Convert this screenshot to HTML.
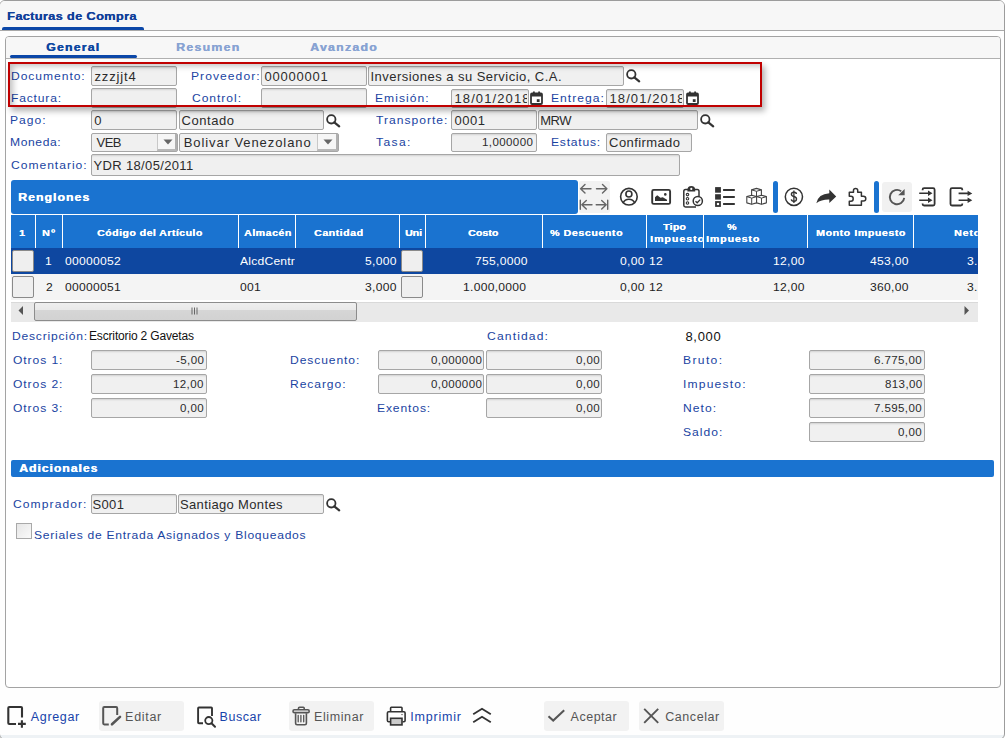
<!DOCTYPE html><html><head><meta charset="utf-8"><style>
*{box-sizing:border-box;margin:0;padding:0}
html,body{width:1005px;height:738px;overflow:hidden;background:#fff;font-family:"Liberation Sans",sans-serif}
div{position:absolute}
.t{white-space:pre;line-height:20px}
.inp{border:1px solid #a6a6a6;border-radius:2px;background:#f0f0f0;box-shadow:inset 0 2px 2px -1px rgba(0,0,0,.13)}
svg{position:absolute;overflow:visible}
</style></head><body>
<div style="left:-1px;top:0px;width:1006px;height:740px;border:1px solid #9c9c9c;border-radius:6px;background:linear-gradient(#fefefe 734px,#eef2f5 734px)"></div>
<div style="left:0px;top:1px;width:1004px;height:29px;background:#f7f7f7;border-radius:5px 5px 0 0"></div>
<div style="left:0px;top:30px;width:1004px;height:1px;background:#a9a9a9"></div>
<div style="left:2px;top:27px;width:142px;height:3px;background:#0b47a8;border-radius:2px 2px 0 0"></div>
<div class="t" style="left:6.50px;top:6px;font-size:11.5px;font-weight:bold;color:#10409a;letter-spacing:0.254px;transform:scaleX(1.12);transform-origin:0 0;text-shadow:0.25px 0 0 #10409a;">Facturas de Compra</div>
<div style="left:5px;top:36px;width:996px;height:652px;border:1px solid #a3a3a3;border-radius:4px;background:#fff"></div>
<div style="left:6px;top:37px;width:994px;height:21px;background:#f7f7f7;border-radius:3px 3px 0 0"></div>
<div style="left:6px;top:58px;width:994px;height:1px;background:#b0b0b0"></div>
<div style="left:10px;top:55px;width:127px;height:3px;background:#0b47a8;border-radius:2px"></div>
<div class="t" style="left:46.40px;top:37px;font-size:11px;font-weight:bold;color:#0d47a1;letter-spacing:1.054px;transform:scaleX(1.12);transform-origin:0 0;text-shadow:0.4px 0 0 #0d47a1;">General</div>
<div class="t" style="left:176.00px;top:37px;font-size:11px;font-weight:bold;color:#88a3d3;letter-spacing:1.125px;transform:scaleX(1.12);transform-origin:0 0;text-shadow:0.4px 0 0 #88a3d3;">Resumen</div>
<div class="t" style="left:310.00px;top:37px;font-size:11px;font-weight:bold;color:#88a3d3;letter-spacing:1.125px;transform:scaleX(1.12);transform-origin:0 0;text-shadow:0.4px 0 0 #88a3d3;">Avanzado</div>
<div class="t" style="left:11.20px;top:66px;font-size:11px;font-weight:normal;color:#1a44a2;letter-spacing:0.856px;transform:scaleX(1.1);transform-origin:0 0;">Documento:</div>
<div class="inp" style="left:91px;top:66px;width:86px;height:20px;"></div>
<div class="t" style="left:94.50px;top:67px;font-size:13px;font-weight:normal;color:#2b2b2b;letter-spacing:0.850px;">zzzjjt4</div>
<div class="t" style="left:191.10px;top:66px;font-size:11px;font-weight:normal;color:#1a44a2;letter-spacing:0.951px;transform:scaleX(1.1);transform-origin:0 0;">Proveedor:</div>
<div class="inp" style="left:261px;top:66px;width:106px;height:20px;"></div>
<div class="t" style="left:264.50px;top:67px;font-size:13px;font-weight:normal;color:#2b2b2b;letter-spacing:0.786px;">00000001</div>
<div class="inp" style="left:368px;top:66px;width:256px;height:20px;"></div>
<div class="t" style="left:370.50px;top:67px;font-size:13px;font-weight:normal;color:#2b2b2b;letter-spacing:0.467px;">Inversiones a su Servicio, C.A.</div>
<div class="t" style="left:11.20px;top:88px;font-size:11px;font-weight:normal;color:#1a44a2;letter-spacing:0.736px;transform:scaleX(1.1);transform-origin:0 0;">Factura:</div>
<div class="inp" style="left:91px;top:88px;width:86px;height:20px;"></div>
<div class="t" style="left:192.10px;top:88px;font-size:11px;font-weight:normal;color:#1a44a2;letter-spacing:0.864px;transform:scaleX(1.1);transform-origin:0 0;">Control:</div>
<div class="inp" style="left:261px;top:88px;width:106px;height:20px;"></div>
<div class="t" style="left:375.00px;top:88px;font-size:11px;font-weight:normal;color:#1a44a2;letter-spacing:0.932px;transform:scaleX(1.1);transform-origin:0 0;">Emisión:</div>
<div class="inp" style="left:451px;top:89px;width:78px;height:19px;"></div>
<div class="t" style="left:454.50px;top:89px;font-size:13px;font-weight:normal;color:#2b2b2b;letter-spacing:1.100px;width:72.00px;overflow:hidden;">18/01/2018</div>
<div class="t" style="left:551.20px;top:88px;font-size:11px;font-weight:normal;color:#1a44a2;letter-spacing:0.914px;transform:scaleX(1.1);transform-origin:0 0;">Entrega:</div>
<div class="inp" style="left:606px;top:89px;width:78px;height:19px;"></div>
<div class="t" style="left:609.50px;top:89px;font-size:13px;font-weight:normal;color:#2b2b2b;letter-spacing:1.100px;width:72.00px;overflow:hidden;">18/01/2018</div>
<div class="t" style="left:10.40px;top:110px;font-size:11px;font-weight:normal;color:#1a44a2;letter-spacing:0.893px;transform:scaleX(1.1);transform-origin:0 0;">Pago:</div>
<div class="inp" style="left:91px;top:110px;width:86px;height:20px;"></div>
<div class="t" style="left:94.20px;top:111px;font-size:13px;font-weight:normal;color:#2b2b2b;letter-spacing:0.000px;">0</div>
<div class="inp" style="left:179px;top:110px;width:145px;height:20px;"></div>
<div class="t" style="left:181.50px;top:111px;font-size:13px;font-weight:normal;color:#2b2b2b;letter-spacing:0.567px;">Contado</div>
<div class="t" style="left:376.00px;top:110px;font-size:11px;font-weight:normal;color:#1a44a2;letter-spacing:0.902px;transform:scaleX(1.1);transform-origin:0 0;">Transporte:</div>
<div class="inp" style="left:451px;top:110px;width:86px;height:20px;"></div>
<div class="t" style="left:454.50px;top:111px;font-size:13px;font-weight:normal;color:#2b2b2b;letter-spacing:0.533px;">0001</div>
<div class="inp" style="left:538px;top:110px;width:160px;height:20px;"></div>
<div class="t" style="left:540.20px;top:111px;font-size:13px;font-weight:normal;color:#2b2b2b;letter-spacing:-0.500px;">MRW</div>
<div class="t" style="left:10.40px;top:132px;font-size:11px;font-weight:normal;color:#1a44a2;letter-spacing:0.549px;transform:scaleX(1.1);transform-origin:0 0;">Moneda:</div>
<div class="t" style="left:376.00px;top:132px;font-size:11px;font-weight:normal;color:#1a44a2;letter-spacing:1.243px;transform:scaleX(1.1);transform-origin:0 0;">Tasa:</div>
<div class="t" style="left:550.60px;top:132px;font-size:11px;font-weight:normal;color:#1a44a2;letter-spacing:0.705px;transform:scaleX(1.1);transform-origin:0 0;">Estatus:</div>
<div class="inp" style="left:451px;top:133px;width:86px;height:19px;"></div>
<div class="t" style="left:481.80px;top:132px;font-size:10.5px;font-weight:normal;color:#2b2b2b;letter-spacing:0.353px;transform:scaleX(1.1);transform-origin:0 0;">1,000000</div>
<div class="inp" style="left:606px;top:133px;width:86px;height:19px;"></div>
<div class="t" style="left:609.10px;top:133px;font-size:13px;font-weight:normal;color:#2b2b2b;letter-spacing:0.400px;">Confirmado</div>
<div class="t" style="left:11.40px;top:155px;font-size:11px;font-weight:normal;color:#1a44a2;letter-spacing:0.883px;transform:scaleX(1.1);transform-origin:0 0;">Comentario:</div>
<div class="inp" style="left:91px;top:154px;width:589px;height:22px;"></div>
<div class="t" style="left:93.50px;top:156px;font-size:13px;font-weight:normal;color:#2b2b2b;letter-spacing:0.350px;">YDR 18/05/2011</div>
<div style="left:91px;top:133px;width:87px;height:19px;border:1px solid #a6a6a6;border-radius:2px;background:#f0f0f0"></div>
<div style="left:157px;top:134px;width:20px;height:17px;background:#f6f6f6;border-left:1px solid #c8c8c8;border-right:2px solid #b0b0b0;border-bottom:2px solid #b8b8b8"></div>
<svg style="left:162.5px;top:139px" width="10" height="6"><path d="M0.5 0.5 L9.5 0.5 L5 5.5 Z" fill="#666"/></svg>
<div class="t" style="left:96.50px;top:133px;font-size:13px;font-weight:normal;color:#2b2b2b;letter-spacing:-0.500px;">VEB</div>
<div style="left:179px;top:133px;width:160px;height:19px;border:1px solid #a6a6a6;border-radius:2px;background:#f0f0f0"></div>
<div style="left:317px;top:134px;width:21px;height:17px;background:#f6f6f6;border-left:1px solid #c8c8c8;border-right:2px solid #b0b0b0;border-bottom:2px solid #b8b8b8"></div>
<svg style="left:323.0px;top:139px" width="10" height="6"><path d="M0.5 0.5 L9.5 0.5 L5 5.5 Z" fill="#666"/></svg>
<div class="t" style="left:183.70px;top:133px;font-size:13px;font-weight:normal;color:#2b2b2b;letter-spacing:0.924px;">Bolivar Venezolano</div>
<svg style="left:626px;top:69px" width="15" height="13" viewBox="0 0 15 13"><circle cx="5.3" cy="5.3" r="4.2" fill="none" stroke="#333" stroke-width="1.8"/><path d="M8.3 8.3 L13.2 12.4" stroke="#333" stroke-width="2.2" stroke-linecap="round"/></svg>
<svg style="left:326px;top:114px" width="15" height="13" viewBox="0 0 15 13"><circle cx="5.3" cy="5.3" r="4.2" fill="none" stroke="#333" stroke-width="1.8"/><path d="M8.3 8.3 L13.2 12.4" stroke="#333" stroke-width="2.2" stroke-linecap="round"/></svg>
<svg style="left:700px;top:114px" width="15" height="13" viewBox="0 0 15 13"><circle cx="5.3" cy="5.3" r="4.2" fill="none" stroke="#333" stroke-width="1.8"/><path d="M8.3 8.3 L13.2 12.4" stroke="#333" stroke-width="2.2" stroke-linecap="round"/></svg>
<svg style="left:530px;top:91px" width="13" height="14" viewBox="0 0 13 14"><rect x="1" y="2.5" width="11" height="10.5" rx="1" fill="none" stroke="#333" stroke-width="1.8"/><rect x="1" y="2.5" width="11" height="3" fill="#333"/><rect x="3" y="0.5" width="1.8" height="3" fill="#333"/><rect x="8.2" y="0.5" width="1.8" height="3" fill="#333"/><rect x="6.8" y="8.2" width="2.8" height="2.8" fill="#333"/></svg>
<svg style="left:686px;top:91px" width="13" height="14" viewBox="0 0 13 14"><rect x="1" y="2.5" width="11" height="10.5" rx="1" fill="none" stroke="#333" stroke-width="1.8"/><rect x="1" y="2.5" width="11" height="3" fill="#333"/><rect x="3" y="0.5" width="1.8" height="3" fill="#333"/><rect x="8.2" y="0.5" width="1.8" height="3" fill="#333"/><rect x="6.8" y="8.2" width="2.8" height="2.8" fill="#333"/></svg>
<div style="left:8px;top:62px;width:754px;height:45px;border:2px solid #c00000;box-shadow:3px 4px 6px rgba(0,0,0,.3), inset 5px 4px 6px -2px rgba(0,0,0,.25)"></div>
<div style="left:11px;top:180px;width:567px;height:34px;background:#1a73d0;border-radius:3px"></div>
<div class="t" style="left:17.80px;top:187px;font-size:11px;font-weight:bold;color:#fff;letter-spacing:0.899px;transform:scaleX(1.12);transform-origin:0 0;text-shadow:0.4px 0 0 #fff;">Renglones</div>
<div style="left:11px;top:215px;width:967px;height:33px;background:#1a73d0"></div>
<div style="left:35px;top:215px;width:1px;height:33px;background:#fff"></div>
<div style="left:62px;top:215px;width:1px;height:33px;background:#fff"></div>
<div style="left:238px;top:215px;width:1px;height:33px;background:#fff"></div>
<div style="left:295px;top:215px;width:1px;height:33px;background:#fff"></div>
<div style="left:399px;top:215px;width:1px;height:33px;background:#fff"></div>
<div style="left:425px;top:215px;width:1px;height:33px;background:#fff"></div>
<div style="left:542px;top:215px;width:1px;height:33px;background:#fff"></div>
<div style="left:646px;top:215px;width:1px;height:33px;background:#fff"></div>
<div style="left:703px;top:215px;width:1px;height:33px;background:#fff"></div>
<div style="left:807px;top:215px;width:1px;height:33px;background:#fff"></div>
<div style="left:913px;top:215px;width:1px;height:33px;background:#fff"></div>
<div class="t" style="left:19.00px;top:223px;font-size:9.5px;font-weight:bold;color:#fff;letter-spacing:0.000px;transform:scaleX(1.12);transform-origin:0 0;text-shadow:0.2px 0 0 #fff;">1</div>
<div class="t" style="left:41.80px;top:223px;font-size:9.5px;font-weight:bold;color:#fff;letter-spacing:1.218px;transform:scaleX(1.12);transform-origin:0 0;text-shadow:0.2px 0 0 #fff;">Nº</div>
<div class="t" style="left:96.90px;top:223px;font-size:9.5px;font-weight:bold;color:#fff;letter-spacing:0.373px;transform:scaleX(1.12);transform-origin:0 0;text-shadow:0.2px 0 0 #fff;">Código del Artículo</div>
<div class="t" style="left:243.60px;top:223px;font-size:9.5px;font-weight:bold;color:#fff;letter-spacing:0.423px;transform:scaleX(1.12);transform-origin:0 0;text-shadow:0.2px 0 0 #fff;">Almacén</div>
<div class="t" style="left:314.20px;top:223px;font-size:9.5px;font-weight:bold;color:#fff;letter-spacing:0.438px;transform:scaleX(1.12);transform-origin:0 0;text-shadow:0.2px 0 0 #fff;">Cantidad</div>
<div class="t" style="left:404.70px;top:223px;font-size:9.5px;font-weight:bold;color:#fff;letter-spacing:-0.061px;transform:scaleX(1.12);transform-origin:0 0;text-shadow:0.2px 0 0 #fff;">Uni</div>
<div class="t" style="left:468.30px;top:223px;font-size:9.5px;font-weight:bold;color:#fff;letter-spacing:0.038px;transform:scaleX(1.12);transform-origin:0 0;text-shadow:0.2px 0 0 #fff;">Costo</div>
<div class="t" style="left:549.50px;top:223px;font-size:9.5px;font-weight:bold;color:#fff;letter-spacing:0.503px;transform:scaleX(1.12);transform-origin:0 0;text-shadow:0.2px 0 0 #fff;">% Descuento</div>
<div class="t" style="left:663.10px;top:217px;font-size:9.5px;font-weight:bold;color:#fff;letter-spacing:0.182px;transform:scaleX(1.12);transform-origin:0 0;text-shadow:0.2px 0 0 #fff;">Tipo</div>
<div class="t" style="left:650.20px;top:229px;font-size:9.5px;font-weight:bold;color:#fff;letter-spacing:0.859px;transform:scaleX(1.12);transform-origin:0 0;text-shadow:0.2px 0 0 #fff;width:47.14px;overflow:hidden;">Impuesto</div>
<div class="t" style="left:726.60px;top:217px;font-size:9.5px;font-weight:bold;color:#fff;letter-spacing:0.000px;transform:scaleX(1.12);transform-origin:0 0;text-shadow:0.2px 0 0 #fff;">%</div>
<div class="t" style="left:705.50px;top:229px;font-size:9.5px;font-weight:bold;color:#fff;letter-spacing:0.757px;transform:scaleX(1.12);transform-origin:0 0;text-shadow:0.2px 0 0 #fff;">Impuesto</div>
<div class="t" style="left:815.60px;top:223px;font-size:9.5px;font-weight:bold;color:#fff;letter-spacing:0.494px;transform:scaleX(1.12);transform-origin:0 0;text-shadow:0.2px 0 0 #fff;">Monto Impuesto</div>
<div class="t" style="left:953.80px;top:223px;font-size:9.5px;font-weight:bold;color:#fff;letter-spacing:0.705px;transform:scaleX(1.12);transform-origin:0 0;text-shadow:0.2px 0 0 #fff;width:20.71px;overflow:hidden;">Neto</div>
<div style="left:11px;top:248px;width:967px;height:26px;background:#0e47a0"></div>
<div style="left:11px;top:274px;width:967px;height:26px;background:#f4f4f4"></div>
<div style="left:12px;top:250px;width:22px;height:22px;background:#efefef;border:1px solid #8a8a8a;border-radius:2px"></div>
<div style="left:401px;top:250px;width:22px;height:22px;background:#efefef;border:1px solid #8a8a8a;border-radius:2px"></div>
<div class="t" style="left:45.20px;top:251px;font-size:11px;font-weight:normal;color:#fff;letter-spacing:0.000px;transform:scaleX(1.1);transform-origin:0 0;">1</div>
<div class="t" style="left:64.60px;top:251px;font-size:11px;font-weight:normal;color:#fff;letter-spacing:0.235px;transform:scaleX(1.1);transform-origin:0 0;">00000052</div>
<div class="t" style="left:240.00px;top:251px;font-size:11px;font-weight:normal;color:#fff;letter-spacing:0.200px;transform:scaleX(1.1);transform-origin:0 0;width:50.00px;overflow:hidden;">AlcdCentr</div>
<div class="t" style="left:365.35px;top:251px;font-size:11px;font-weight:normal;color:#fff;letter-spacing:0.250px;transform:scaleX(1.1);transform-origin:0 0;">5,000</div>
<div class="t" style="left:474.89px;top:251px;font-size:11px;font-weight:normal;color:#fff;letter-spacing:0.250px;transform:scaleX(1.1);transform-origin:0 0;">755,0000</div>
<div class="t" style="left:619.94px;top:251px;font-size:11px;font-weight:normal;color:#fff;letter-spacing:0.250px;transform:scaleX(1.1);transform-origin:0 0;">0,00</div>
<div class="t" style="left:648.60px;top:251px;font-size:11px;font-weight:normal;color:#fff;letter-spacing:0.250px;transform:scaleX(1.1);transform-origin:0 0;">12</div>
<div class="t" style="left:773.35px;top:251px;font-size:11px;font-weight:normal;color:#fff;letter-spacing:0.250px;transform:scaleX(1.1);transform-origin:0 0;">12,00</div>
<div class="t" style="left:870.16px;top:251px;font-size:11px;font-weight:normal;color:#fff;letter-spacing:0.250px;transform:scaleX(1.1);transform-origin:0 0;">453,00</div>
<div class="t" style="left:967.40px;top:251px;font-size:11px;font-weight:normal;color:#fff;letter-spacing:0.250px;transform:scaleX(1.1);transform-origin:0 0;width:8.73px;overflow:hidden;">3.</div>
<div style="left:12px;top:276px;width:22px;height:22px;background:#efefef;border:1px solid #8a8a8a;border-radius:2px"></div>
<div style="left:401px;top:276px;width:22px;height:22px;background:#efefef;border:1px solid #8a8a8a;border-radius:2px"></div>
<div class="t" style="left:46.20px;top:277px;font-size:11px;font-weight:normal;color:#222;letter-spacing:0.000px;transform:scaleX(1.1);transform-origin:0 0;">2</div>
<div class="t" style="left:64.60px;top:277px;font-size:11px;font-weight:normal;color:#222;letter-spacing:0.235px;transform:scaleX(1.1);transform-origin:0 0;">00000051</div>
<div class="t" style="left:240.00px;top:277px;font-size:11px;font-weight:normal;color:#222;letter-spacing:0.200px;transform:scaleX(1.1);transform-origin:0 0;width:50.00px;overflow:hidden;">001</div>
<div class="t" style="left:365.35px;top:277px;font-size:11px;font-weight:normal;color:#222;letter-spacing:0.250px;transform:scaleX(1.1);transform-origin:0 0;">3,000</div>
<div class="t" style="left:463.22px;top:277px;font-size:11px;font-weight:normal;color:#222;letter-spacing:0.250px;transform:scaleX(1.1);transform-origin:0 0;">1.000,0000</div>
<div class="t" style="left:619.94px;top:277px;font-size:11px;font-weight:normal;color:#222;letter-spacing:0.250px;transform:scaleX(1.1);transform-origin:0 0;">0,00</div>
<div class="t" style="left:648.60px;top:277px;font-size:11px;font-weight:normal;color:#222;letter-spacing:0.250px;transform:scaleX(1.1);transform-origin:0 0;">12</div>
<div class="t" style="left:773.35px;top:277px;font-size:11px;font-weight:normal;color:#222;letter-spacing:0.250px;transform:scaleX(1.1);transform-origin:0 0;">12,00</div>
<div class="t" style="left:870.16px;top:277px;font-size:11px;font-weight:normal;color:#222;letter-spacing:0.250px;transform:scaleX(1.1);transform-origin:0 0;">360,00</div>
<div class="t" style="left:967.40px;top:277px;font-size:11px;font-weight:normal;color:#222;letter-spacing:0.250px;transform:scaleX(1.1);transform-origin:0 0;width:8.73px;overflow:hidden;">3.</div>
<div style="left:11px;top:302px;width:967px;height:20px;background:#e9e9e9;border-top:1px solid #d9d9d9"></div>
<svg style="left:18px;top:306px" width="6" height="10"><path d="M5 0 L5 9 L0.5 4.5 Z" fill="#555"/></svg>
<svg style="left:964px;top:306px" width="6" height="10"><path d="M0.5 0 L0.5 9 L5 4.5 Z" fill="#555"/></svg>
<div style="left:33.5px;top:302px;width:323.5px;height:19px;border:1px solid #8c8c8c;border-radius:2px;background:linear-gradient(#efefef 0,#e9e9e9 40%,#d6d6d6 41%,#d2d2d2 100%)"></div>
<svg style="left:191px;top:307px" width="8" height="8"><path d="M1 0.5V7.5M3.5 0.5V7.5M6 0.5V7.5" stroke="#666" stroke-width="1"/></svg>
<div class="t" style="left:12.10px;top:326px;font-size:11px;font-weight:normal;color:#1a44a2;letter-spacing:0.706px;transform:scaleX(1.1);transform-origin:0 0;">Descripción:</div>
<div class="t" style="left:89.00px;top:326px;font-size:12px;font-weight:normal;color:#111;letter-spacing:-0.158px;">Escritorio 2 Gavetas</div>
<div class="t" style="left:486.70px;top:326px;font-size:11px;font-weight:normal;color:#1a44a2;letter-spacing:1.044px;transform:scaleX(1.1);transform-origin:0 0;">Cantidad:</div>
<div class="t" style="left:685.40px;top:327px;font-size:13px;font-weight:normal;color:#111;letter-spacing:0.700px;">8,000</div>
<div class="t" style="left:12.60px;top:350px;font-size:11px;font-weight:normal;color:#1a44a2;letter-spacing:0.830px;transform:scaleX(1.1);transform-origin:0 0;">Otros 1:</div>
<div class="inp" style="left:91px;top:350px;width:116px;height:20px;"></div>
<div class="t" style="left:175.67px;top:350px;font-size:10.5px;font-weight:normal;color:#2b2b2b;letter-spacing:0.350px;transform:scaleX(1.1);transform-origin:0 0;">-5,00</div>
<div class="t" style="left:12.60px;top:374px;font-size:11px;font-weight:normal;color:#1a44a2;letter-spacing:0.830px;transform:scaleX(1.1);transform-origin:0 0;">Otros 2:</div>
<div class="inp" style="left:91px;top:374px;width:116px;height:20px;"></div>
<div class="t" style="left:173.03px;top:374px;font-size:10.5px;font-weight:normal;color:#2b2b2b;letter-spacing:0.350px;transform:scaleX(1.1);transform-origin:0 0;">12,00</div>
<div class="t" style="left:12.60px;top:398px;font-size:11px;font-weight:normal;color:#1a44a2;letter-spacing:0.830px;transform:scaleX(1.1);transform-origin:0 0;">Otros 3:</div>
<div class="inp" style="left:91px;top:398px;width:116px;height:20px;"></div>
<div class="t" style="left:179.91px;top:398px;font-size:10.5px;font-weight:normal;color:#2b2b2b;letter-spacing:0.350px;transform:scaleX(1.1);transform-origin:0 0;">0,00</div>
<div class="t" style="left:290.20px;top:350px;font-size:11px;font-weight:normal;color:#1a44a2;letter-spacing:0.822px;transform:scaleX(1.1);transform-origin:0 0;">Descuento:</div>
<div class="t" style="left:290.20px;top:374px;font-size:11px;font-weight:normal;color:#1a44a2;letter-spacing:0.836px;transform:scaleX(1.1);transform-origin:0 0;">Recargo:</div>
<div class="t" style="left:377.00px;top:398px;font-size:11px;font-weight:normal;color:#1a44a2;letter-spacing:0.795px;transform:scaleX(1.1);transform-origin:0 0;">Exentos:</div>
<div class="inp" style="left:378px;top:350px;width:106px;height:20px;"></div>
<div class="t" style="left:430.62px;top:350px;font-size:10.5px;font-weight:normal;color:#2b2b2b;letter-spacing:0.350px;transform:scaleX(1.1);transform-origin:0 0;">0,000000</div>
<div class="inp" style="left:378px;top:374px;width:106px;height:20px;"></div>
<div class="t" style="left:430.62px;top:374px;font-size:10.5px;font-weight:normal;color:#2b2b2b;letter-spacing:0.350px;transform:scaleX(1.1);transform-origin:0 0;">0,000000</div>
<div class="inp" style="left:486px;top:350px;width:116px;height:20px;"></div>
<div class="t" style="left:575.90px;top:350px;font-size:10.5px;font-weight:normal;color:#2b2b2b;letter-spacing:0.350px;transform:scaleX(1.1);transform-origin:0 0;">0,00</div>
<div class="inp" style="left:486px;top:374px;width:116px;height:20px;"></div>
<div class="t" style="left:575.90px;top:374px;font-size:10.5px;font-weight:normal;color:#2b2b2b;letter-spacing:0.350px;transform:scaleX(1.1);transform-origin:0 0;">0,00</div>
<div class="inp" style="left:486px;top:398px;width:116px;height:20px;"></div>
<div class="t" style="left:575.90px;top:398px;font-size:10.5px;font-weight:normal;color:#2b2b2b;letter-spacing:0.350px;transform:scaleX(1.1);transform-origin:0 0;">0,00</div>
<div class="t" style="left:682.60px;top:350px;font-size:11px;font-weight:normal;color:#1a44a2;letter-spacing:1.231px;transform:scaleX(1.1);transform-origin:0 0;">Bruto:</div>
<div class="inp" style="left:809px;top:350px;width:116px;height:20px;"></div>
<div class="t" style="left:874.32px;top:350px;font-size:10.5px;font-weight:normal;color:#2b2b2b;letter-spacing:0.350px;transform:scaleX(1.1);transform-origin:0 0;">6.775,00</div>
<div class="t" style="left:682.60px;top:374px;font-size:11px;font-weight:normal;color:#1a44a2;letter-spacing:1.065px;transform:scaleX(1.1);transform-origin:0 0;">Impuesto:</div>
<div class="inp" style="left:809px;top:374px;width:116px;height:20px;"></div>
<div class="t" style="left:884.76px;top:374px;font-size:10.5px;font-weight:normal;color:#2b2b2b;letter-spacing:0.350px;transform:scaleX(1.1);transform-origin:0 0;">813,00</div>
<div class="t" style="left:682.60px;top:398px;font-size:11px;font-weight:normal;color:#1a44a2;letter-spacing:0.925px;transform:scaleX(1.1);transform-origin:0 0;">Neto:</div>
<div class="inp" style="left:809px;top:398px;width:116px;height:20px;"></div>
<div class="t" style="left:874.32px;top:398px;font-size:10.5px;font-weight:normal;color:#2b2b2b;letter-spacing:0.350px;transform:scaleX(1.1);transform-origin:0 0;">7.595,00</div>
<div class="t" style="left:682.60px;top:422px;font-size:11px;font-weight:normal;color:#1a44a2;letter-spacing:0.924px;transform:scaleX(1.1);transform-origin:0 0;">Saldo:</div>
<div class="inp" style="left:809px;top:422px;width:116px;height:20px;"></div>
<div class="t" style="left:898.40px;top:422px;font-size:10.5px;font-weight:normal;color:#2b2b2b;letter-spacing:0.350px;transform:scaleX(1.1);transform-origin:0 0;">0,00</div>
<div style="left:11px;top:460px;width:983px;height:17px;background:#1a73d0;border-radius:2px"></div>
<div class="t" style="left:18.80px;top:458px;font-size:11px;font-weight:bold;color:#fff;letter-spacing:0.812px;transform:scaleX(1.12);transform-origin:0 0;text-shadow:0.4px 0 0 #fff;">Adicionales</div>
<div class="t" style="left:13.10px;top:494px;font-size:11px;font-weight:normal;color:#1a44a2;letter-spacing:0.969px;transform:scaleX(1.1);transform-origin:0 0;">Comprador:</div>
<div class="inp" style="left:91px;top:494px;width:86px;height:20px;"></div>
<div class="t" style="left:92.50px;top:495px;font-size:13px;font-weight:normal;color:#2b2b2b;letter-spacing:0.350px;">S001</div>
<div class="inp" style="left:178px;top:494px;width:146px;height:20px;"></div>
<div class="t" style="left:180.00px;top:495px;font-size:13px;font-weight:normal;color:#2b2b2b;letter-spacing:0.350px;">Santiago Montes</div>
<svg style="left:326px;top:498px" width="15" height="13" viewBox="0 0 15 13"><circle cx="5.3" cy="5.3" r="4.2" fill="none" stroke="#333" stroke-width="1.8"/><path d="M8.3 8.3 L13.2 12.4" stroke="#333" stroke-width="2.2" stroke-linecap="round"/></svg>
<div style="left:16px;top:523px;width:16px;height:16px;background:linear-gradient(135deg,#e6e6e6,#fafafa);border:1px solid #a9a9a9"></div>
<div class="t" style="left:33.70px;top:525px;font-size:11px;font-weight:normal;color:#1a44a2;letter-spacing:0.652px;transform:scaleX(1.1);transform-origin:0 0;">Seriales de Entrada Asignados y Bloqueados</div>
<div style="left:579px;top:181px;width:31px;height:31.5px;background:#f2f2f2;border-radius:2px"></div>
<svg style="left:576px;top:180px" width="36" height="34" viewBox="576 180 36 34"><g fill="none" stroke="#666" stroke-width="1.4" stroke-linecap="round" stroke-linejoin="round"><path d="M591 188.7H580.6M585 184.4L580.6 188.7L585 193"/><path d="M596.5 188.7H606.9M602.5 184.4L606.9 188.7L602.5 193"/><path d="M580.3 200.3V209.3M592 204.7H581.8M586.3 200.4L581.8 204.7L586.3 209"/><path d="M607.7 200.3V209.3M596.2 204.7H606.2M601.7 200.4L606.2 204.7L601.7 209"/></g></svg>
<svg style="left:618px;top:186px" width="22" height="22" viewBox="618 186 22 22"><circle cx="628.9" cy="196.7" r="8.3" fill="none" stroke="#333" stroke-width="1.6"/><circle cx="628.9" cy="194" r="3" fill="none" stroke="#333" stroke-width="1.6"/><path d="M623.2 202.6C624.3 200.3 626.3 199.2 628.9 199.2C631.5 199.2 633.5 200.3 634.6 202.6" fill="none" stroke="#333" stroke-width="1.6"/></svg>
<svg style="left:650px;top:188px" width="23" height="18" viewBox="650 188 23 18"><rect x="652.2" y="189.9" width="17.9" height="14" rx="1.5" fill="none" stroke="#333" stroke-width="1.9"/><path d="M655 201V197.2L657.2 195.3L660.5 197.8L662.8 197.2L667 199.8V201Z" fill="#333"/><circle cx="665.3" cy="194.4" r="1.3" fill="#333"/></svg>
<svg style="left:681px;top:184px" width="25" height="26" viewBox="681 184 25 26"><path d="M694.5 189.4H697.3Q699 189.4 699 191.2V197 M696 207H685.5Q683.8 207 683.8 205.3V191.2Q683.8 189.4 685.5 189.4H688.5" fill="none" stroke="#333" stroke-width="1.5"/><path d="M687.4 191.5V189.9Q687.4 186 691.3 186Q695.2 186 695.2 189.9V191.5Z" fill="#333"/><circle cx="691.3" cy="188.9" r="1.1" fill="#fff"/><g fill="none" stroke="#333" stroke-width="1.1"><circle cx="687.5" cy="194.6" r="1.25"/><circle cx="687.5" cy="198.8" r="1.25"/><circle cx="687.5" cy="203" r="1.25"/></g><circle cx="697.8" cy="201" r="4.6" fill="#fff" stroke="#333" stroke-width="1.5"/><path d="M695.5 201.2L697.2 202.8L700.2 199.6" fill="none" stroke="#333" stroke-width="1.3"/></svg>
<svg style="left:713px;top:185px" width="24" height="24" viewBox="713 185 24 24"><rect x="715.1" y="187.1" width="5.8" height="5.6" fill="#333"/><rect x="715.1" y="194.2" width="5.8" height="5.4" fill="#333"/><rect x="716" y="202" width="4" height="4" fill="none" stroke="#333" stroke-width="1.8"/><path d="M723.1 189.9H734.8M723.1 196.9H734.8M723.1 203.9H734.8" stroke="#333" stroke-width="2"/></svg>
<svg style="left:744px;top:186px" width="26" height="20" viewBox="744 186 26 20"><path d="M756.5 188.4L761.40 189.85L761.40 196.05L756.50 197.50L751.60 196.05L751.60 189.85Z" fill="#fff" stroke="#444" stroke-width="1.1" stroke-linejoin="round"/><path d="M751.60 189.85L756.50 191.30L761.40 189.85M756.50 191.30L756.50 197.50" fill="none" stroke="#444" stroke-width="1" stroke-linejoin="round"/><path d="M751.7 195.2L756.60 196.65L756.60 202.85L751.70 204.30L746.80 202.85L746.80 196.65Z" fill="#fff" stroke="#444" stroke-width="1.1" stroke-linejoin="round"/><path d="M746.80 196.65L751.70 198.10L756.60 196.65M751.70 198.10L751.70 204.30" fill="none" stroke="#444" stroke-width="1" stroke-linejoin="round"/><path d="M761.5 195.2L766.40 196.65L766.40 202.85L761.50 204.30L756.60 202.85L756.60 196.65Z" fill="#fff" stroke="#444" stroke-width="1.1" stroke-linejoin="round"/><path d="M756.60 196.65L761.50 198.10L766.40 196.65M761.50 198.10L761.50 204.30" fill="none" stroke="#444" stroke-width="1" stroke-linejoin="round"/></svg>
<div style="left:773.3px;top:181px;width:4.8px;height:32px;background:#1a73d0;border-radius:3px"></div>
<div style="left:874.2px;top:181px;width:4.8px;height:32px;background:#1a73d0;border-radius:3px"></div>
<svg style="left:783px;top:186px" width="22" height="22" viewBox="783 186 22 22"><circle cx="793.9" cy="196.8" r="8.6" fill="none" stroke="#333" stroke-width="1.5"/><path d="M796.4 194Q796.2 192.3 793.9 192.3Q791.4 192.3 791.4 194.3Q791.4 195.9 793.9 196.5Q796.5 197.1 796.5 199Q796.5 201.2 793.9 201.2Q791.5 201.2 791.3 199.4" fill="none" stroke="#333" stroke-width="1.4"/><path d="M793.9 190.6V203" stroke="#333" stroke-width="1.3"/></svg>
<svg style="left:814px;top:187px" width="25" height="18" viewBox="814 187 25 18"><path d="M816.3 203.2Q818.2 193.9 829.3 193.2V189.6L836.2 196.4L829.3 203.1V199.6Q821.5 199.4 816.3 203.2Z" fill="#333"/></svg>
<svg style="left:846px;top:185px" width="24" height="24" viewBox="846 185 24 24"><path d="M849.3 192.3H853.5V190.3Q853.5 188.4 855.6 188.4Q857.7 188.4 857.7 190.3V192.3H861.4V196.3H863.3Q865.8 196.3 865.8 198.7Q865.8 201 863.3 201H861.4V205.2H849.3V201.3H851Q853.2 201.3 853.2 198.8Q853.2 196.3 851 196.3H849.3Z" fill="none" stroke="#333" stroke-width="1.5" stroke-linejoin="round"/></svg>
<div style="left:882px;top:182px;width:30px;height:30px;background:#f1f1f1;border-radius:3px"></div>
<svg style="left:886px;top:186px" width="22" height="22" viewBox="886 186 22 22"><path d="M901.2 191.2A7.2 7.2 0 1 0 904.2 197.8" fill="none" stroke="#555" stroke-width="1.9"/><path d="M904.6 189V195.3H898.2Z" fill="#555"/></svg>
<svg style="left:916px;top:185px" width="24" height="24" viewBox="916 185 24 24"><path d="M922.6 190.2V189.7Q922.6 188.2 924.1 188.2H933.1Q934.6 188.2 934.6 189.7V204Q934.6 205.5 933.1 205.5H924.1Q922.6 205.5 922.6 204V203.5" fill="none" stroke="#333" stroke-width="1.8" stroke-linejoin="round"/><path d="M919.2 193.3H928.5 M919.2 200.2H928.5" stroke="#333" stroke-width="1.6"/><path d="M928 190.6L932.5 193.3L928 196Z M928 197.5L932.5 200.2L928 202.9Z" fill="#333"/></svg>
<svg style="left:947px;top:185px" width="28" height="24" viewBox="947 185 28 24"><path d="M962.3 190.2V189.7Q962.3 188.2 960.8 188.2H952Q950.5 188.2 950.5 189.7V204Q950.5 205.5 952 205.5H960.8Q962.3 205.5 962.3 204V203.5" fill="none" stroke="#333" stroke-width="1.8" stroke-linejoin="round"/><path d="M958.6 193.4H968 M958.6 200.3H968" stroke="#333" stroke-width="1.6"/><path d="M967.6 190.7L972.3 193.4L967.6 196.1Z M967.6 197.6L972.3 200.3L967.6 203Z" fill="#333"/></svg>
<div style="left:99px;top:701px;width:85px;height:30px;background:#f2f2f2;border-radius:3px"></div>
<div style="left:289px;top:701px;width:85px;height:30px;background:#f2f2f2;border-radius:3px"></div>
<div style="left:544px;top:701px;width:85px;height:30px;background:#f2f2f2;border-radius:3px"></div>
<div style="left:639px;top:701px;width:85px;height:30px;background:#f2f2f2;border-radius:3px"></div>
<svg style="left:5px;top:704px" width="24" height="26" viewBox="5 704 24 26"><path d="M22 717.6V708.1Q22 707 21 707H9.3Q8.3 707 8.3 708.1V722.9Q8.3 724 9.3 724H16" fill="none" stroke="#333" stroke-width="2.1"/><path d="M18 723.9H25.8 M21.9 720.3V727.8" stroke="#333" stroke-width="2.1"/></svg>
<div class="t" style="left:30.80px;top:707px;font-size:12.5px;font-weight:normal;color:#1743aa;letter-spacing:0.650px;">Agregar</div>
<svg style="left:100px;top:704px" width="24" height="26" viewBox="100 704 24 26"><path d="M117.2 715V708.2Q117.2 707.1 116.1 707.1H104.3Q103.2 707.1 103.2 708.2V723.3Q103.2 724.4 104.3 724.4H108.8" fill="none" stroke="#555" stroke-width="2"/><path d="M112 724.3L120 716.9" stroke="#555" stroke-width="2.6" stroke-linecap="round"/></svg>
<div class="t" style="left:125.10px;top:707px;font-size:12.5px;font-weight:normal;color:#555;letter-spacing:0.700px;">Editar</div>
<svg style="left:195px;top:704px" width="24" height="26" viewBox="195 704 24 26"><path d="M212 716V708.3Q212 707.5 211.2 707.5H198.9Q198.1 707.5 198.1 708.3V722.5Q198.1 723.3 198.9 723.3H203" fill="none" stroke="#333" stroke-width="1.9"/><circle cx="208.8" cy="720.6" r="3.6" fill="none" stroke="#333" stroke-width="1.8"/><path d="M211.5 723.3L215 726.8" stroke="#333" stroke-width="2" stroke-linecap="round"/></svg>
<div class="t" style="left:219.60px;top:707px;font-size:12.5px;font-weight:normal;color:#1743aa;letter-spacing:0.540px;">Buscar</div>
<svg style="left:290px;top:704px" width="22" height="24" viewBox="290 704 22 24"><rect x="293" y="709.8" width="16.2" height="2.8" rx="1.4" fill="none" stroke="#555" stroke-width="1.6"/><path d="M298.5 709.6V708.2Q298.5 707.2 299.5 707.2H303.2Q304.2 707.2 304.2 708.2V709.6" fill="none" stroke="#555" stroke-width="1.6"/><path d="M295.6 713.2V723.2Q295.6 724.7 297.1 724.7H304.9Q306.4 724.7 306.4 723.2V713.2" fill="none" stroke="#555" stroke-width="1.6"/><path d="M298.2 715.3V721.8M300.9 715.3V721.8M303.7 715.3V721.8" stroke="#555" stroke-width="1.3" stroke-linecap="round"/></svg>
<div class="t" style="left:314.00px;top:707px;font-size:12.5px;font-weight:normal;color:#555;letter-spacing:0.600px;">Eliminar</div>
<svg style="left:384px;top:704px" width="24" height="24" viewBox="384 704 24 24"><path d="M390.6 711.3V708Q390.6 707.3 391.3 707.3H401.3Q402 707.3 402 708V711.3" fill="none" stroke="#333" stroke-width="1.6"/><path d="M390 721.7H388.6Q387.4 721.7 387.4 720.5V713Q387.4 711.7 388.6 711.7H403.9Q405.1 711.7 405.1 713V720.5Q405.1 721.7 403.9 721.7H402.6" fill="none" stroke="#333" stroke-width="1.6"/><rect x="390.6" y="718.3" width="11.4" height="6.6" fill="#ccc" stroke="#333" stroke-width="1.6"/><circle cx="402" cy="714.6" r="0.7" fill="#333"/></svg>
<div class="t" style="left:410.20px;top:707px;font-size:12.5px;font-weight:normal;color:#1743aa;letter-spacing:0.814px;">Imprimir</div>
<svg style="left:471px;top:706px" width="22" height="19" viewBox="471 706 22 19"><path d="M473.2 714.2L482 708.8L490.8 714.2 M473.2 722.2L482 716.8L490.8 722.2" fill="none" stroke="#333" stroke-width="1.9"/></svg>
<svg style="left:545px;top:706px" width="22" height="18" viewBox="545 706 22 18"><path d="M548.5 716.2L553.2 720.6L564.2 710.2" fill="none" stroke="#555" stroke-width="2"/></svg>
<div class="t" style="left:570.60px;top:707px;font-size:12.5px;font-weight:normal;color:#555;letter-spacing:0.500px;">Aceptar</div>
<svg style="left:641px;top:706px" width="20" height="20" viewBox="641 706 20 20"><path d="M644.2 708.8L658.2 722.8M658.2 708.8L644.2 722.8" fill="none" stroke="#555" stroke-width="1.9"/></svg>
<div class="t" style="left:665.20px;top:707px;font-size:12.5px;font-weight:normal;color:#555;letter-spacing:0.571px;">Cancelar</div>
</body></html>
